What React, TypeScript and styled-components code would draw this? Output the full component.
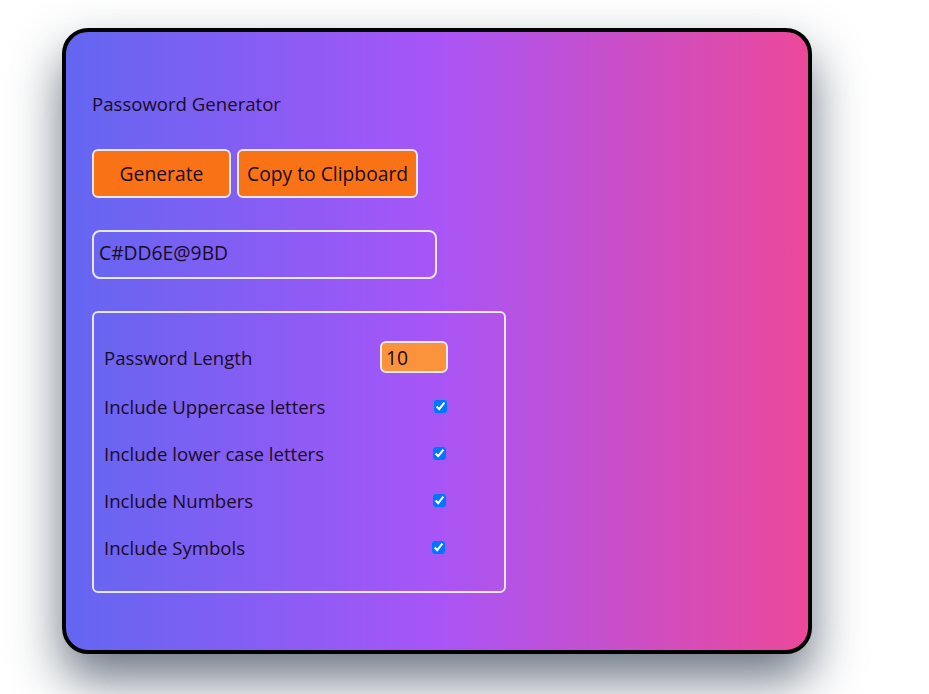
import React, { useState } from "react";
import styled, { createGlobalStyle } from "styled-components";

const Global = createGlobalStyle`
  html, body { margin: 0; padding: 0; background: #ffffff; }
  body { font-family: "Open Sans", "Noto Sans", sans-serif; }
  * { box-sizing: border-box; }
`;

const Page = styled.div`
  padding: 28px 0 0 62px;
  width: 929px;
  height: 694px;
  overflow: hidden;
`;

const Card = styled.div`
  width: 750px;
  height: 626px;
  border: 4px solid #000;
  border-radius: 26px;
  background: linear-gradient(to right, #6366f1, #a855f7, #ec4899);
  box-shadow: 0 25px 50px rgba(51, 65, 85, 0.72);
  padding: 58px 26px 0 26px;
  color: #1a0b24;
  font-size: 18.6px;
`;

const Title = styled.div`
  line-height: 28px;
  height: 28px;
  margin-bottom: 31px;
`;

const Toolbar = styled.div`
  display: flex;
  gap: 6px;
  margin-bottom: 32px;
`;

const Button = styled.button<{ $w?: number }>`
  height: 49px;
  ${(p) => (p.$w ? `width: ${p.$w}px;` : "padding: 0 8px;")}
  background: #f97316;
  border: 2px solid #e5e7eb;
  border-radius: 6px;
  font-family: inherit;
  font-size: 19.3px;
  color: #1a0b24;
`;

const Output = styled.input`
  display: block;
  width: 345px;
  height: 49px;
  border: 2px solid #e5e7eb;
  border-radius: 8px;
  background: transparent;
  padding: 0 5px 4px 5px;
  font-family: inherit;
  font-size: 19.3px;
  color: #1a0b24;
  margin-bottom: 32px;
  outline: none;
`;

const Settings = styled.div`
  width: 414px;
  height: 282px;
  border: 2px solid #e5e7eb;
  border-radius: 6px;
  padding: 28px 10px 0 10px;
  display: flex;
  flex-direction: column;
  gap: 19px;
`;

const Row = styled.label<{ $h: number }>`
  display: grid;
  grid-template-columns: 276px 1fr;
  align-items: center;
  height: ${(p) => p.$h}px;
`;

const NumInput = styled.input`
  width: 68px;
  height: 32px;
  background: #fb923c;
  border: 2px solid #e5e7eb;
  border-radius: 6px;
  padding: 0 4px;
  font-family: inherit;
  font-size: 19.3px;
  color: #1a0b24;
  outline: none;
`;

const Check = styled.input<{ $off: number }>`
  width: 13px;
  height: 13px;
  margin: 0 0 0 ${(p) => p.$off}px;
  justify-self: start;
`;

const options = [
  { label: "Include Uppercase letters", off: 54 },
  { label: "Include lower case letters", off: 53 },
  { label: "Include Numbers", off: 53 },
  { label: "Include Symbols", off: 52 },
];

export default function App() {
  const [len, setLen] = useState("10");
  return (
    <Page>
      <Global />
      <Card>
        <Title>Passoword Generator</Title>
        <Toolbar>
          <Button $w={139}>Generate</Button>
          <Button>Copy to Clipboard</Button>
        </Toolbar>
        <Output readOnly value="C#DD6E@9BD" />
        <Settings>
          <Row $h={32}>
            <span>Password Length</span>
            <NumInput value={len} onChange={(e) => setLen(e.target.value)} />
          </Row>
          {options.map((o) => (
            <Row $h={28} key={o.label}>
              <span>{o.label}</span>
              <Check type="checkbox" defaultChecked $off={o.off} />
            </Row>
          ))}
        </Settings>
      </Card>
    </Page>
  );
}
